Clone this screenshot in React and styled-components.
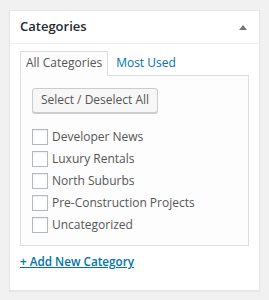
import React from "react";
import styled, { createGlobalStyle } from "styled-components";

const Global = createGlobalStyle`
  html, body { margin: 0; padding: 0; background: #f1f1f1; }
  body { font-family: "Open Sans", "Noto Sans", sans-serif; }
  * { box-sizing: border-box; }
`;

const Page = styled.div`
  padding: 10px 9px 9px 9px;
`;

const Box = styled.div`
  background: #fff;
  border: 1px solid #e5e5e5;
  box-shadow: 0 1px 1px rgba(0, 0, 0, 0.04);
  height: 281px;
`;

const Header = styled.div`
  display: flex;
  align-items: center;
  justify-content: space-between;
  height: 33px;
  padding: 0 12px 0 10px;
  border-bottom: 1px solid #eee;
`;

const Title = styled.h2`
  margin: 0;
  font-size: 13px;
  font-weight: 600;
  color: #23282d;
  line-height: 1;
  padding-bottom: 1px;
`;

const Toggle = styled.span`
  width: 0;
  height: 0;
  border-left: 4px solid transparent;
  border-right: 4px solid transparent;
  border-bottom: 5px solid #72777c;
  margin-top: 1px;
`;

const Inside = styled.div`
  padding: 7px 10px 0 10px;
`;

const Tabs = styled.ul`
  display: flex;
  align-items: flex-end;
  list-style: none;
  margin: 0;
  padding: 0;
  gap: 2px;
`;

const Tab = styled.li`
  font-size: 12px;
  line-height: 15px;
  padding: 3px 5px 5px;
  margin-bottom: -1px;
  color: ${(p) => (p.$active ? "#555" : "#0073aa")};
  background: ${(p) => (p.$active ? "#fdfdfd" : "transparent")};
  border: 1px solid ${(p) => (p.$active ? "#ddd" : "transparent")};
  border-bottom-color: ${(p) => (p.$active ? "#fdfdfd" : "transparent")};
  position: relative;
`;

const TabPanel = styled.div`
  border: 1px solid #ddd;
  background: #fdfdfd;
  height: 171px;
  padding: 12px 11px;
`;

const Button = styled.button`
  display: block;
  font-family: inherit;
  font-size: 12px;
  color: #555;
  background: #f7f7f7;
  border: 1px solid #ccc;
  border-radius: 3px;
  box-shadow: 0 1px 0 #ccc;
  height: 25px;
  width: 126px;
  padding: 0 0 1px;
  line-height: 22px;
  margin: 0;
`;

const List = styled.ul`
  list-style: none;
  margin: 16px 0 0;
  padding: 0;
  display: flex;
  flex-direction: column;
`;

const Item = styled.li`
  height: 22px;
  display: flex;
  align-items: flex-start;
`;

const Check = styled.span`
  width: 16px;
  height: 16px;
  border: 1px solid #b4b9be;
  background: #fff;
  box-shadow: inset 0 1px 2px rgba(0, 0, 0, 0.07);
  flex: none;
`;

const Label = styled.span`
  font-size: 12px;
  color: #555;
  line-height: 16px;
  margin-left: 4px;
`;

const Adder = styled.a`
  display: inline-block;
  margin-top: 6px;
  font-size: 11.7px;
  font-weight: 600;
  color: #0073aa;
  text-decoration: underline;
  line-height: 18px;
`;

const cats = [
  "Developer News",
  "Luxury Rentals",
  "North Suburbs",
  "Pre-Construction Projects",
  "Uncategorized",
];

export default function App() {
  return (
    <>
      <Global />
      <Page>
        <Box>
          <Header>
            <Title>Categories</Title>
            <Toggle />
          </Header>
          <Inside>
            <Tabs>
              <Tab $active>All Categories</Tab>
              <Tab>Most Used</Tab>
            </Tabs>
            <TabPanel>
              <Button>Select / Deselect All</Button>
              <List>
                {cats.map((c) => (
                  <Item key={c}>
                    <Check />
                    <Label>{c}</Label>
                  </Item>
                ))}
              </List>
            </TabPanel>
            <Adder href="#">+ Add New Category</Adder>
          </Inside>
        </Box>
      </Page>
    </>
  );
}
